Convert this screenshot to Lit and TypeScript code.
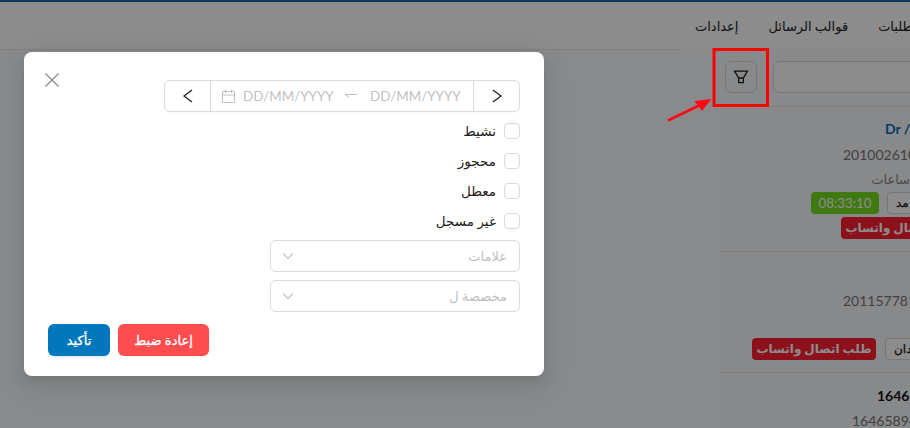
import { LitElement, html, css } from "lit";
import { customElement } from "lit/decorators.js";

@customElement("app-root")
export class AppRoot extends LitElement {
  static styles = css`
    :host { display: block; width: 910px; height: 428px; position: relative; overflow: hidden; background: #fff;
      font-family: "Lato", "Noto Sans", "DejaVu Sans", sans-serif; color: #222; }
    .page { width: 910px; height: 428px; display: flex; flex-direction: column; overflow: hidden; background: #f8fafc; }
    .topline { height: 2px; background: #1b64a4; flex: none; }
    .nav { height: 47px; flex: none; background: #fff; display: flex; align-items: center; gap: 30px; padding-left: 695px; white-space: nowrap; font-size: 13px; color: #222; overflow: hidden; box-sizing: border-box; }
    .main { flex: 1; display: flex; min-height: 0; }
    .left { width: 720px; flex: none; background: #fafbfd; }
    .rule { width: 680px; height: 1px; background: #e8e8e8; }
    .side { flex: 1; min-width: 0; overflow: hidden; background: #f8fafc; }
    .search { height: 58px; box-sizing: border-box; border-bottom: 1px solid #e6e6e6; display: flex; align-items: center; gap: 16px; padding: 0 0 1px 5px; }
    .fbtn { width: 32px; height: 32px; flex: none; box-sizing: border-box; border: 1px solid #d9d9d9; border-radius: 7px; display: flex; align-items: center; justify-content: center; }
    .sinput { width: 200px; height: 32px; flex: none; box-sizing: border-box; border: 1px solid #d9d9d9; border-radius: 7px; background: #fff; }
    .row { box-sizing: border-box; border-bottom: 1px solid #e6e6e6; display: flex; flex-direction: column; white-space: nowrap; font-size: 14px; }
    .r1 { height: 145px; }
    .r2 { height: 121px; }
    .r3 { height: 60px; }
    .name { color: #0070b8; font-weight: 700; font-size: 14px; padding: 13px 0 0 165px; line-height: 18px; }
    .phone { color: #777; font-size: 14px; line-height: 18px; padding: 8px 0 0 123px; }
    .r2 .phone { padding-top: 40px; }
    .r3 .strong { color: #111; font-weight: 700; font-size: 14px; padding: 14px 0 0 157px; line-height: 18px; }
    .r3 .phone { padding: 7px 0 0 132px; }
    .lbl { color: #888; font-size: 13px; line-height: 18px; padding: 6px 0 0 165px; }
    .tags { display: flex; gap: 8px; height: 22px; }
    .t1 { padding: 4px 0 0 91px; }
    .t2 { padding: 3px 0 0 121px; }
    .t3 { padding: 28px 0 0 32px; gap: 9px; }
    .tag { height: 22px; box-sizing: border-box; border-radius: 4px; font-size: 12px; line-height: 20px; padding: 0 8px; flex: none; }
    .plain { background: #fff; border: 1px solid #d9d9d9; color: #111; width: 60px; overflow: hidden; -webkit-text-stroke: .25px #111; }
    .timer { background: #74dc1c; color: #fff; width: 68px; text-align: center; font-size: 13.3px; line-height: 22px; padding: 0; }
    .red { background: #ff2030; color: #fff; line-height: 22px; width: 124px; text-align: center; padding: 0; font-weight: 700; }
    .backdrop { position: absolute; inset: 0; background: rgba(0,0,0,.45); }
    .modal { position: absolute; left: 24px; top: 52px; width: 520px; height: 324px; box-sizing: border-box; background: #fff; border-radius: 8px;
      padding: 28px 24px 20px; display: flex; flex-direction: column; align-items: flex-start;
      box-shadow: 0 6px 16px 0 rgba(0,0,0,.08), 0 3px 6px -4px rgba(0,0,0,.12), 0 9px 28px 8px rgba(0,0,0,.05); }
    .close { position: absolute; left: 20px; top: 20px; width: 16px; height: 16px; display: block; }
    .date { width: 356px; height: 32px; flex: none; box-sizing: border-box; border: 1px solid #d9d9d9; border-radius: 6px; display: flex; direction: ltr; box-shadow: 0 1px 2px rgba(0,0,0,.03); margin-bottom: 4px; }
    .darrow { width: 45px; flex: none; display: flex; align-items: center; justify-content: center; }
    .dmid { flex: 1; border-left: 1px solid #d9d9d9; border-right: 1px solid #d9d9d9; display: flex; align-items: center; padding-left: 11px; font-size: 13.4px; color: #bfbfbf; white-space: nowrap; }
    .dtxt { width: 92px; flex: none; }
    .cal { margin-right: 8px; flex: none; }
    .swap { margin: 0 13px 0 10px; flex: none; }
    .check { height: 30px; display: flex; align-items: center; gap: 8px; font-size: 13.5px; color: #222; }
    .box { width: 16px; height: 16px; box-sizing: border-box; border: 1px solid #d9d9d9; border-radius: 4px; background: #fff; flex: none; }
    .select { width: 250px; height: 32px; flex: none; box-sizing: border-box; border: 1px solid #d9d9d9; border-radius: 6px; display: flex; align-items: center; justify-content: space-between; padding: 0 12px 0 11px; font-size: 13px; color: #bfbfbf; margin-top: 8px; }
    .first { margin-top: 4px; }
    .actions { display: flex; gap: 8px; margin-top: 12px; align-self: flex-end; }
    .btn { height: 32px; border-radius: 6px; color: #fff; font-size: 13px; -webkit-text-stroke: .3px #fff; display: flex; align-items: center; justify-content: center; box-sizing: border-box; }
    .reset { width: 91px; background: #ff4d4f; }
    .ok { width: 62px; background: #0277bd; box-shadow: 0 2px 0 rgba(5,145,255,.1); }
    .mark { position: absolute; left: 0; top: 0; display: block; }
  `;

  render() {
    return html`
      <div class="page">
        <div class="topline"></div>
        <div class="nav"><span>إعدادات</span><span>قوالب الرسائل</span><span>طلبات</span></div>
        <div class="main">
          <div class="left"><div class="rule"></div></div>
          <div class="side">
            <div class="search">
              <div class="fbtn">
                <svg width="16" height="16" viewBox="0 0 16 16" fill="none" stroke="#1c1c1c" stroke-width="1.3"><path d="M1.6 2.2H14.4L10.3 9H5.7ZM5.7 9V13.6H10.3V9"/></svg>
              </div>
              <div class="sinput"></div>
            </div>
            <div class="row r1">
              <div class="name">Dr / Ahmed</div>
              <div class="phone">201002610000</div>
              <div class="lbl" dir="rtl">ساعات</div>
              <div class="tags t1"><span class="tag timer">08:33:10</span><span class="tag plain" dir="ltr">مد</span></div>
              <div class="tags t2"><span class="tag red" dir="rtl">طلب اتصال واتساب</span></div>
            </div>
            <div class="row r2">
              <div class="phone">201157781000</div>
              <div class="tags t3"><span class="tag red" dir="rtl">طلب اتصال واتساب</span><span class="tag plain" dir="ltr">دان</span></div>
            </div>
            <div class="row r3">
              <div class="strong">164658</div>
              <div class="phone">16465894000</div>
            </div>
          </div>
        </div>
      </div>

      <div class="backdrop"></div>

      <div class="modal" dir="rtl">
        <svg class="close" viewBox="0 0 16 16" fill="none" stroke="#8c8c8c" stroke-width="1.3"><path d="M1.5 1.5L14.5 14.5M14.5 1.5L1.5 14.5"/></svg>
        <div class="date">
          <div class="darrow"><svg width="14" height="14" viewBox="0 0 14 14" fill="none" stroke="#222" stroke-width="1.3"><path d="M11 1L3 7L11 13"/></svg></div>
          <div class="dmid">
            <svg class="cal" width="13" height="14" viewBox="0 0 13 14" fill="none" stroke="#bfbfbf"><path d="M.5 2.5H12.5V13.5H.5ZM.5 6H12.5M3.5 .5V4M9.5 .5V4"/></svg>
            <span class="dtxt">DD/MM/YYYY</span>
            <svg class="swap" width="12" height="6" viewBox="0 0 12 6" fill="none" stroke="#bfbfbf"><path d="M0 1.5H12M0 1.5L4 4.5"/></svg>
            <span class="dtxt">DD/MM/YYYY</span>
          </div>
          <div class="darrow"><svg width="14" height="14" viewBox="0 0 14 14" fill="none" stroke="#222" stroke-width="1.3"><path d="M3 1L11 7L3 13"/></svg></div>
        </div>
        <label class="check"><span class="box"></span><span>نشيط</span></label>
        <label class="check"><span class="box"></span><span>محجوز</span></label>
        <label class="check"><span class="box"></span><span>معطل</span></label>
        <label class="check"><span class="box"></span><span>غير مسجل</span></label>
        <div class="select first"><span>علامات</span><svg width="12" height="8" viewBox="0 0 12 8" fill="none" stroke="#bfbfbf" stroke-width="1.1"><path d="M1 1.5L6 6.5L11 1.5"/></svg></div>
        <div class="select"><span>مخصصة ل</span><svg width="12" height="8" viewBox="0 0 12 8" fill="none" stroke="#bfbfbf" stroke-width="1.1"><path d="M1 1.5L6 6.5L11 1.5"/></svg></div>
        <div class="actions">
          <div class="btn reset">إعادة ضبط</div>
          <div class="btn ok">تأكيد</div>
        </div>
      </div>

      <svg class="mark" width="910" height="428" viewBox="0 0 910 428" fill="none">
        <rect x="714" y="49.5" width="53.5" height="56" stroke="#ff0000" stroke-width="3"/>
        <path d="M668 120.5L700 105" stroke="#ff0a14" stroke-width="3"/>
        <path d="M711.5 99L694.5 101L702 111Z" fill="#ff0a14"/>
      </svg>
    `;
  }
}
